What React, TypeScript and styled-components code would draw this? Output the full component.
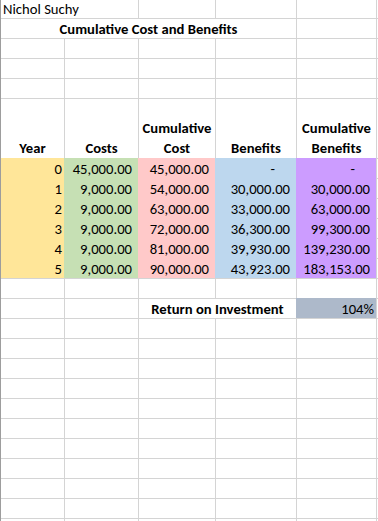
import React from "react";
import styled, { createGlobalStyle } from "styled-components";

const GRID = "#d4d4d4";

const FILLS = {
  year: "#ffe699",
  cost: "#c6e0b4",
  cumCost: "#ffc9c9",
  benefit: "#bdd7ee",
  cumBenefit: "#cc9cff",
  roi: "#adb9ca",
};

const data = [
  { year: 0, cost: "45,000.00", cumCost: "45,000.00", benefit: null, cumBenefit: null },
  { year: 1, cost: "9,000.00", cumCost: "54,000.00", benefit: "30,000.00", cumBenefit: "30,000.00" },
  { year: 2, cost: "9,000.00", cumCost: "63,000.00", benefit: "33,000.00", cumBenefit: "63,000.00" },
  { year: 3, cost: "9,000.00", cumCost: "72,000.00", benefit: "36,300.00", cumBenefit: "99,300.00" },
  { year: 4, cost: "9,000.00", cumCost: "81,000.00", benefit: "39,930.00", cumBenefit: "139,230.00" },
  { year: 5, cost: "9,000.00", cumCost: "90,000.00", benefit: "43,923.00", cumBenefit: "183,153.00" },
];

const GlobalStyle = createGlobalStyle`
  html, body {
    margin: 0;
    padding: 0;
    background: #fff;
    overflow: hidden;
  }
  body {
    font-family: Carlito, Lato, "Liberation Sans", sans-serif;
    font-size: 11pt;
    color: #000;
  }
`;

const Sheet = styled.div`
  display: grid;
  grid-template-columns: 63px 74px 77px 81px 80px 1fr;
  grid-template-rows: 18px repeat(4, 20px) 60px;
  grid-auto-rows: 20px;
  border-left: 1px solid #9d9d9d;
  height: 521px;
  overflow: hidden;
`;

type CellProps = {
  $span?: number;
  $fill?: string;
  $align?: "left" | "center" | "right";
  $bold?: boolean;
  $edge?: boolean;
  $noTop?: boolean;
  $pad?: number;
};

const justify = { left: "flex-start", center: "center", right: "flex-end" };

const Cell = styled.div<CellProps>`
  grid-column: span ${(p) => p.$span ?? 1};
  box-sizing: border-box;
  min-width: 0;
  display: flex;
  align-items: flex-end;
  justify-content: ${(p) => justify[p.$align ?? "left"]};
  text-align: ${(p) => p.$align ?? "left"};
  padding: 0 ${(p) => p.$pad ?? 2}px 0 2px;
  background: ${(p) => p.$fill ?? "#fff"};
  border-top: ${(p) => (p.$noTop ? "none" : `1px solid ${p.$fill ?? GRID}`)};
  border-left: ${(p) => (p.$edge ? "none" : `1px solid ${p.$fill ?? GRID}`)};
  font-weight: ${(p) => (p.$bold ? 700 : 400)};
  line-height: 18px;
  white-space: nowrap;
`;

const HeaderCell = styled(Cell)`
  white-space: normal;
  line-height: 20px;
  padding: 0 2px;
`;

const Blank = ({ noTop }: { noTop?: boolean }) => (
  <>
    <Cell $edge $noTop={noTop} />
    <Cell $noTop={noTop} />
    <Cell $noTop={noTop} />
    <Cell $noTop={noTop} />
    <Cell $noTop={noTop} />
    <Cell $noTop={noTop} />
  </>
);

const Money = ({ value, fill }: { value: string | null; fill: string }) => (
  <Cell $fill={fill} $align="right" $pad={value ? 6 : 21}>
    {value ?? "-"}
  </Cell>
);

export default function App() {
  return (
    <>
      <GlobalStyle />
      <Sheet>
        <Cell $edge $noTop $span={2}>
          Nichol Suchy
        </Cell>
        <Cell $noTop />
        <Cell $noTop />
        <Cell $noTop />
        <Cell $noTop />

        <Cell $edge $span={4} $bold $align="center">
          Cumulative Cost and Benefits
        </Cell>
        <Cell />
        <Cell />

        <Blank />
        <Blank />
        <Blank />

        <HeaderCell $edge $bold $align="center">Year</HeaderCell>
        <HeaderCell $bold $align="center">Costs</HeaderCell>
        <HeaderCell $bold $align="center">Cumulative Cost</HeaderCell>
        <HeaderCell $bold $align="center">Benefits</HeaderCell>
        <HeaderCell $bold $align="center">Cumulative Benefits</HeaderCell>
        <HeaderCell />

        {data.map((row) => (
          <React.Fragment key={row.year}>
            <Cell $edge $fill={FILLS.year} $align="right" $pad={2}>
              {row.year}
            </Cell>
            <Money value={row.cost} fill={FILLS.cost} />
            <Money value={row.cumCost} fill={FILLS.cumCost} />
            <Money value={row.benefit} fill={FILLS.benefit} />
            <Money value={row.cumBenefit} fill={FILLS.cumBenefit} />
            <Cell />
          </React.Fragment>
        ))}

        <Blank />

        <Cell $edge />
        <Cell />
        <Cell $span={2} $bold $align="center">
          Return on Investment
        </Cell>
        <Cell $fill={FILLS.roi} $align="right" $pad={2}>
          104%
        </Cell>
        <Cell />

        {Array.from({ length: 12 }, (_, i) => (
          <Blank key={i} />
        ))}
      </Sheet>
    </>
  );
}
